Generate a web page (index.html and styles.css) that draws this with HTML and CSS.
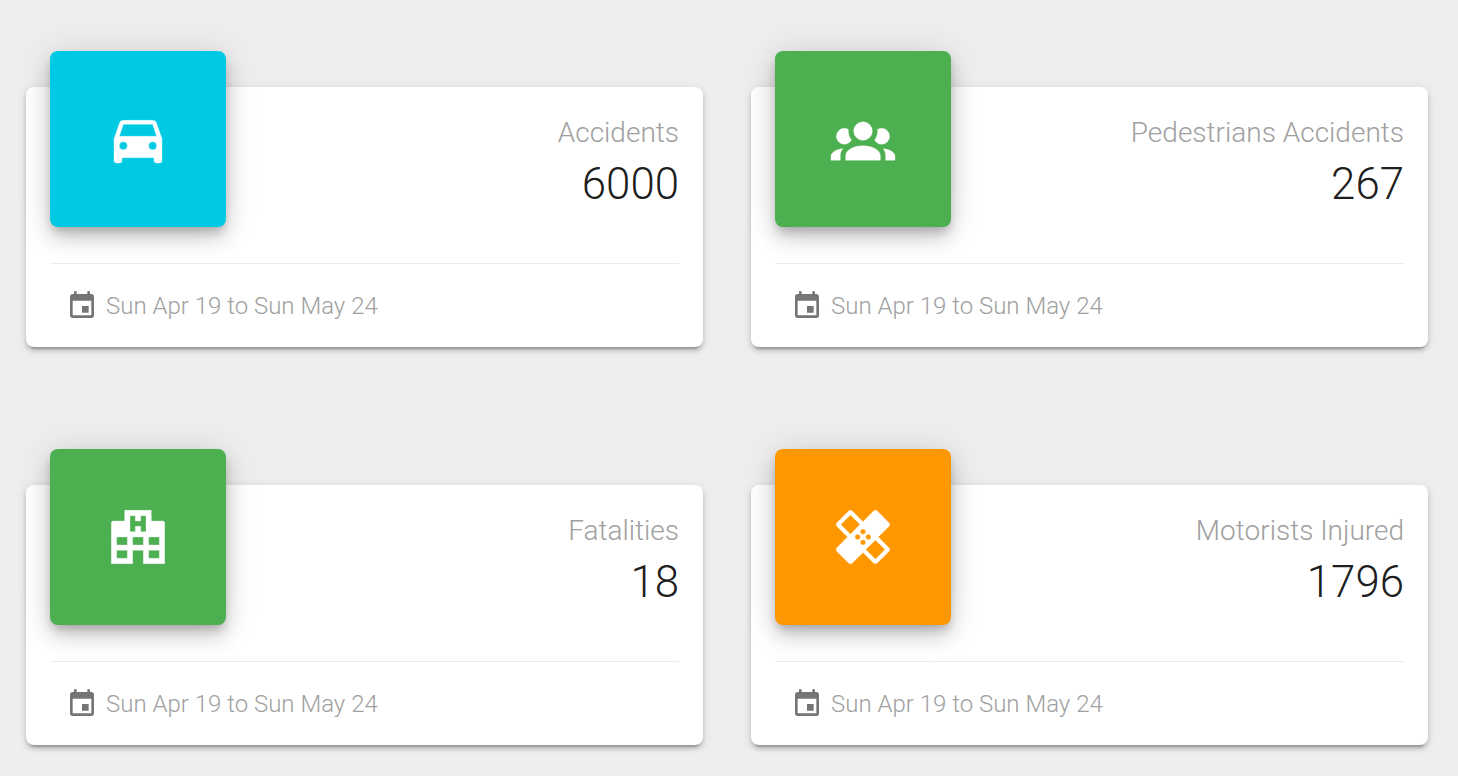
FILE: index.html
```html
<!DOCTYPE html>
<html lang="en">
<head>
    <meta charset="UTF-8">
    <meta name="viewport" content="width=device-width, initial-scale=1.0">
    <title>Accidents Dashboard</title>
    <link rel="stylesheet" href="styles.css">
</head>
<body>

    <!-- Shared calendar icon -->
    <svg class="sprite" width="0" height="0">
        <symbol id="calendar" viewBox="0 0 24 24">
            <path d="M19,19H5V8H19M16,1V3H8V1H6V3H5C3.89,3 3,3.89 3,5V19A2,2 0 0,0 5,21H19A2,2 0 0,0 21,19V5C21,3.89 20.1,3 19,3H18V1M17,12H12V17H17V12Z"/>
        </symbol>
    </svg>

    <main class="stats">
        <section class="card">
            <div class="card-top">
                <div class="tile cyan">
                    <svg viewBox="0 0 24 24"><path d="M5,11L6.5,6.5H17.5L19,11ZM17.5,16A1.5,1.5 0 0,1 16,14.5A1.5,1.5 0 0,1 17.5,13A1.5,1.5 0 0,1 19,14.5A1.5,1.5 0 0,1 17.5,16M6.5,16A1.5,1.5 0 0,1 5,14.5A1.5,1.5 0 0,1 6.5,13A1.5,1.5 0 0,1 8,14.5A1.5,1.5 0 0,1 6.5,16M18.92,6C18.72,5.42 18.16,5 17.5,5H6.5C5.84,5 5.28,5.42 5.08,6L3,12V20A1,1 0 0,0 4,21H5A1,1 0 0,0 6,20V19H18V20A1,1 0 0,0 19,21H20A1,1 0 0,0 21,20V12L18.92,6Z"/></svg>
                </div>
                <div class="info">
                    <div class="label">Accidents</div>
                    <div class="value">6000</div>
                </div>
            </div>
            <div class="card-footer">
                <svg><use href="#calendar"/></svg>
                <span>Sun Apr 19 to Sun May 24</span>
            </div>
        </section>

        <section class="card">
            <div class="card-top">
                <div class="tile green">
                    <svg viewBox="0 0 24 24"><path d="M12,5.5A3.5,3.5 0 0,1 15.5,9A3.5,3.5 0 0,1 12,12.5A3.5,3.5 0 0,1 8.5,9A3.5,3.5 0 0,1 12,5.5M5,8C5.56,8 6.08,8.15 6.53,8.42C6.38,9.85 6.8,11.27 7.66,12.38C7.16,13.34 6.16,14 5,14A3,3 0 0,1 2,11A3,3 0 0,1 5,8M19,8A3,3 0 0,1 22,11A3,3 0 0,1 19,14C17.84,14 16.84,13.34 16.34,12.38C17.2,11.27 17.62,9.85 17.47,8.42C17.92,8.15 18.44,8 19,8M5.5,18.25C5.5,16.18 8.41,14.5 12,14.5C15.59,14.5 18.5,16.18 18.5,18.25V20H5.5V18.25M0,20V18.5C0,17.11 1.89,15.94 4.45,15.6C3.86,16.28 3.5,17.22 3.5,18.25V20H0M24,20H20.5V18.25C20.5,17.22 20.14,16.28 19.55,15.6C22.11,15.94 24,17.11 24,18.5V20Z"/></svg>
                </div>
                <div class="info">
                    <div class="label">Pedestrians Accidents</div>
                    <div class="value">267</div>
                </div>
            </div>
            <div class="card-footer">
                <svg><use href="#calendar"/></svg>
                <span>Sun Apr 19 to Sun May 24</span>
            </div>
        </section>

        <section class="card">
            <div class="card-top">
                <div class="tile green">
                    <svg viewBox="0 0 24 24"><path fill-rule="evenodd" d="M2,22V6.5L2.5,6H7V2H17V6H21.5L22,6.5V22H14V17H10V22ZM9,4V10H11V8H13V10H15V4H13V6H11V4ZM4,20H8V17H4ZM4,15H8V12H4ZM16,20H20V17H16ZM16,15H20V12H16ZM10,15H14V12H10Z"/></svg>
                </div>
                <div class="info">
                    <div class="label">Fatalities</div>
                    <div class="value">18</div>
                </div>
            </div>
            <div class="card-footer">
                <svg><use href="#calendar"/></svg>
                <span>Sun Apr 19 to Sun May 24</span>
            </div>
        </section>

        <section class="card">
            <div class="card-top">
                <div class="tile orange">
                    <svg viewBox="0 0 24 24"><path d="M17.73,12L21.71,8.04C22.1,7.65 22.1,7 21.71,6.63L17.37,2.29C17,1.9 16.35,1.9 15.96,2.29L12,6.27L8,2.29C7.8,2.1 7.55,2 7.29,2C7.04,2 6.78,2.1 6.59,2.29L2.25,6.63C1.86,7 1.86,7.65 2.25,8.04L6.23,12L2.25,16C1.86,16.39 1.86,17 2.25,17.41L6.59,21.75C7,22.14 7.61,22.14 8,21.75L12,17.77L15.96,21.75C16.16,21.95 16.41,22.04 16.67,22.04C16.93,22.04 17.18,21.94 17.37,21.75L21.71,17.41C22.1,17 22.1,16.39 21.71,16L17.73,12M12,9A1,1 0 0,1 13,10A1,1 0 0,1 12,11A1,1 0 0,1 11,10A1,1 0 0,1 12,9M7.29,10.96L3.66,7.34L7.29,3.71L10.91,7.33L7.29,10.96M10,13A1,1 0 0,1 9,12A1,1 0 0,1 10,11A1,1 0 0,1 11,12A1,1 0 0,1 10,13M12,15A1,1 0 0,1 11,14A1,1 0 0,1 12,13A1,1 0 0,1 13,14A1,1 0 0,1 12,15M14,11A1,1 0 0,1 15,12A1,1 0 0,1 14,13A1,1 0 0,1 13,12A1,1 0 0,1 14,11M16.66,20.34L13.03,16.71L16.66,13.09L20.28,16.71L16.66,20.34Z" fill-rule="evenodd"/></svg>
                </div>
                <div class="info">
                    <div class="label">Motorists Injured</div>
                    <div class="value">1796</div>
                </div>
            </div>
            <div class="card-footer">
                <svg><use href="#calendar"/></svg>
                <span>Sun Apr 19 to Sun May 24</span>
            </div>
        </section>
    </main>

</body>
</html>
```
FILE: styles.css
```css
* {
    box-sizing: border-box;
}
body {
    margin: 0;
    height: 776px;
    overflow: hidden;
    background-color: #eee;
    font-family: Roboto, sans-serif;
    font-weight: 300;
}
.sprite {
    display: block;
}
.stats {
    display: grid;
    grid-template-columns: 677px 677px;
    gap: 138px 48px;
    padding: 87px 26px 0;
}
.card {
    height: 260px;
    padding: 0 24px;
    background: white;
    border-radius: 8px;
    box-shadow: 0 6px 2px -4px rgba(0, 0, 0, 0.2), 0 4px 4px 0 rgba(0, 0, 0, 0.14), 0 2px 10px 0 rgba(0, 0, 0, 0.12);
}
.card-top {
    display: flex;
    justify-content: space-between;
    height: 176px;
}

.tile {
    display: flex;
    align-items: center;
    justify-content: center;
    width: 176px;
    height: 176px;
    margin-top: -36px;
    border-radius: 8px;
    box-shadow: 0 6px 10px -2px rgba(0, 0, 0, 0.2), 0 12px 20px 0 rgba(0, 0, 0, 0.14), 0 2px 36px 0 rgba(0, 0, 0, 0.12);
}
.tile svg {
    width: 64px;
    height: 64px;
    overflow: visible;
    fill: white;
    stroke: white;
    stroke-width: 0.12;
}
.cyan {
    background: #00cae3;
}
.green {
    background: #4caf50;
}
.orange {
    background: #ff9800;
}

.info {
    padding-top: 25px;
    text-align: right;
}
.label {
    font-size: 28px;
    line-height: 42px;
    color: #a0a0a0;
}
.value {
    font-size: 43.8px;
    line-height: 60px;
    color: rgba(0, 0, 0, 0.9);
}

.card-footer {
    display: flex;
    align-items: center;
    gap: 8px;
    height: 84px;
    padding-left: 16px;
    border-top: 1px solid #ececec;
    font-size: 24px;
    color: #a0a0a0;
}
.card-footer svg {
    width: 32px;
    height: 32px;
    fill: #757575;
}
```
